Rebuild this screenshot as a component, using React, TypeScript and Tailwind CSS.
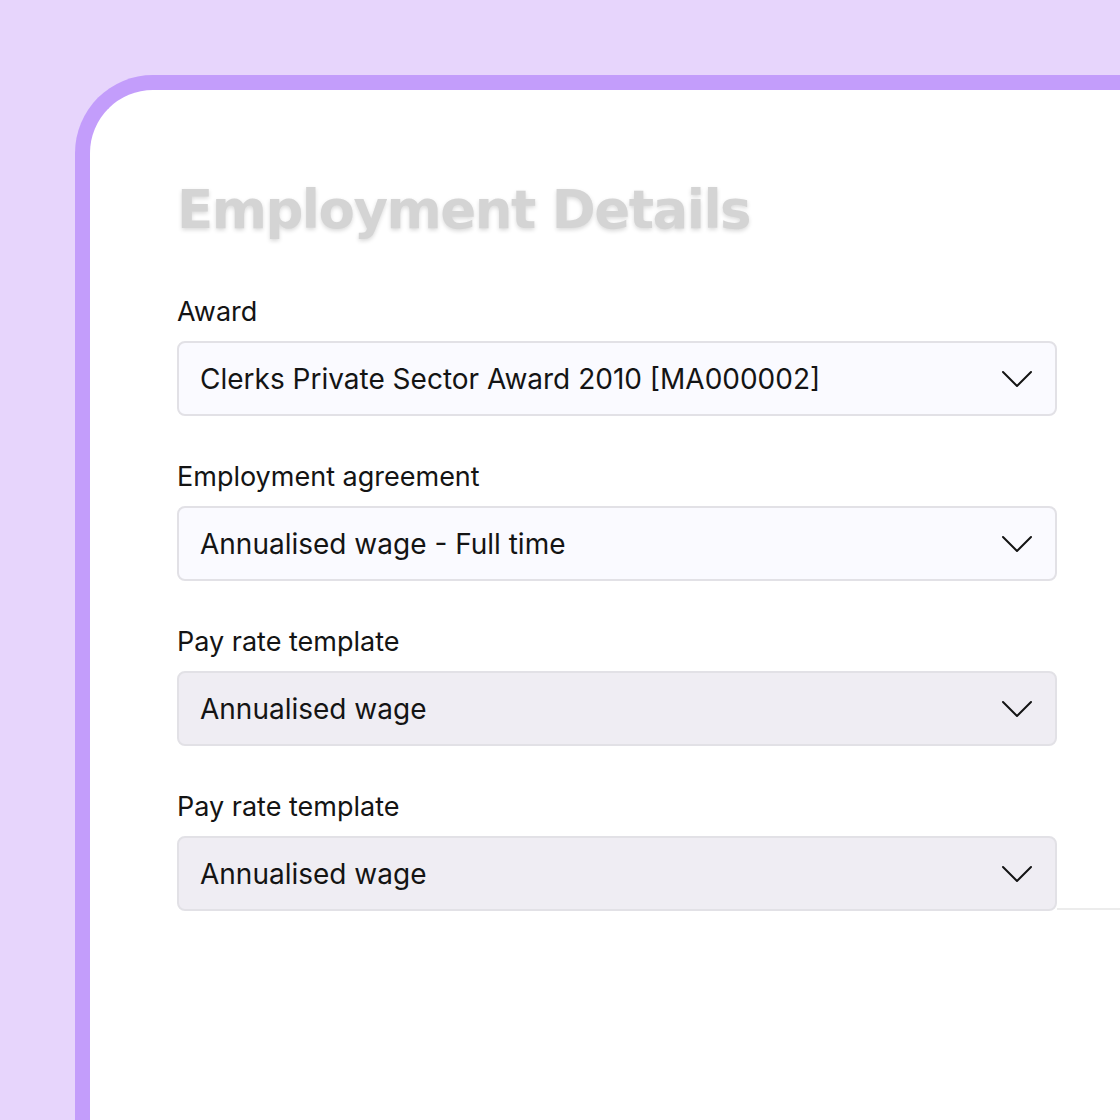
type Field = { label: string; value: string; muted?: boolean };

const fields: Field[] = [
  { label: 'Award', value: 'Clerks Private Sector Award 2010 [MA000002]' },
  { label: 'Employment agreement', value: 'Annualised wage - Full time' },
  { label: 'Pay rate template', value: 'Annualised wage', muted: true },
  { label: 'Pay rate template', value: 'Annualised wage', muted: true },
];

const Chevron = () => (
  <svg width="32" height="18" viewBox="0 0 32 18" fill="none" className="text-[#141414]">
    <path d="M2 2l14 14L30 2" stroke="currentColor" strokeWidth="2" strokeLinecap="round" strokeLinejoin="round" />
  </svg>
);

const SelectField = ({ label, value, muted }: Field) => (
  <div className="flex flex-col gap-[13px]">
    <label className="text-[27px] leading-[33px] text-[#141414]">{label}</label>
    <div
      className={`flex h-[75px] w-[880px] items-center justify-between rounded-[8px] border-2 border-[#e2e1e6] pl-[21px] pr-[22px] ${
        muted ? 'bg-[#efedf3]' : 'bg-[#fafaff]'
      }`}
    >
      <span className="text-[28px] text-[#141414]">{value}</span>
      <Chevron />
    </div>
  </div>
);

export default function App() {
  return (
    <div
      className="h-[1120px] w-[1120px] overflow-hidden bg-[#e7d5fc] pl-[75px] pt-[75px]"
      style={{ fontFamily: 'Inter, "Noto Sans", sans-serif' }}
    >
      <div className="h-[1200px] w-[1200px] rounded-tl-[78px] border-l-[15px] border-t-[15px] border-[#c39dfb] bg-white pl-[87px] pt-[88px]">
        <h1
          className="mb-[53px] text-[53px] font-bold leading-[64px] tracking-[-1.5px] text-[#d4d4d4]"
          style={{ fontFamily: '"DejaVu Sans", sans-serif', textShadow: '0 2px 4px rgba(0,0,0,0.15)' }}
        >
          Employment Details
        </h1>
        <div className="flex flex-col gap-[44px]">
          {fields.map((f, i) => (
            <div key={i} className="relative">
              <SelectField {...f} />
              {i === fields.length - 1 && (
                <div className="absolute bottom-[1px] left-[880px] h-[2px] w-[100px] bg-[#ececec]" />
              )}
            </div>
          ))}
        </div>
      </div>
    </div>
  );
}
